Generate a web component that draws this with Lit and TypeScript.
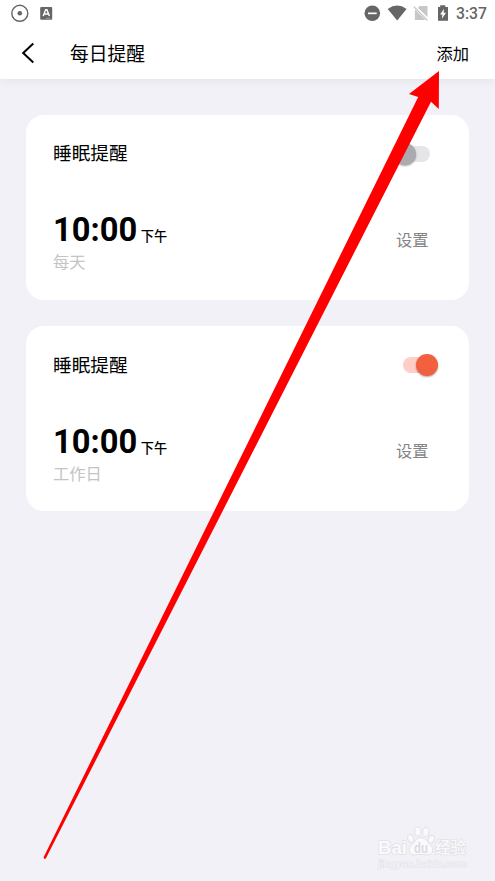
import { LitElement, html, css, svg } from "lit";
import { customElement, property } from "lit/decorators.js";

@customElement("status-bar")
class StatusBar extends LitElement {
  static styles = css`
    :host { display: flex; align-items: center; height: 27px; }
    svg { display: block; flex: 1; height: 27px; }
    .clock { font: 500 15.8px/27px Roboto, sans-serif; color: #666; width: 39px; letter-spacing: -0.05px; }
  `;
  render() {
    return html`
      <svg viewBox="0 0 456 27" width="456" fill="#666">
        <circle cx="19.8" cy="13.3" r="8" fill="none" stroke="#666" stroke-width="1.4" />
        <circle cx="19.8" cy="13.3" r="2.3" />
        <rect x="40.2" y="7" width="12" height="12.7" rx="1" />
        <path d="M43.2 16 45.7 9.8H46.9L49.4 16M44.3 14H48.2" fill="none" stroke="#fff" stroke-width="1.5" />
        <path d="M46 18.3H50.5" stroke="#aaa" stroke-width=".8" />
        <circle cx="372.3" cy="13.3" r="7.8" />
        <rect x="368" y="12.5" width="8.7" height="1.7" fill="#fff" />
        <path d="M387.7 9Q397.2 2.2 406.6 9L397.2 20.6Z" />
        <path d="M419.8 6H427.5V17.2L417.8 7.9ZM414.9 9.3 425.6 20.1H414.9Z" fill="#c7c7c7" />
        <path d="M414.6 5.8 428.3 19.6" stroke="#fff" stroke-width="1.6" />
        <path d="M413.8 6.6 427.5 20.4" stroke="#c0c0c0" stroke-width="1.2" />
        <path d="M440.2 5.3H445.3V7H448V20.8H438V7H440.2Z" />
        <path d="M444 8.8 440.1 14.6H442.4L441.8 18.7 446 12.7H443.6Z" fill="#fff" />
      </svg>
      <span class="clock">3:37</span>
    `;
  }
}

@customElement("toggle-switch")
class ToggleSwitch extends LitElement {
  @property({ type: Boolean, reflect: true }) on = false;
  static styles = css`
    :host { display: flex; align-items: center; width: 27.5px; height: 22px; }
    .track { display: flex; align-items: center; width: 27.5px; height: 15.5px; border-radius: 8px; background: #e5e5e8; }
    .thumb { flex: none; width: 22px; height: 22px; border-radius: 50%; margin-left: -8.5px; background: #aaaaaf; box-shadow: 0 1px 2px #0005; }
    :host([on]) .track { background: #ffcec6; }
    :host([on]) .thumb { background: #f26040; margin-left: 13.5px; }
  `;
  render() {
    return html`<div class="track"><div class="thumb"></div></div>`;
  }
}

@customElement("reminder-card")
class ReminderCard extends LitElement {
  @property() repeat = "";
  @property({ type: Boolean }) active = false;
  static styles = css`
    :host { display: flex; flex-direction: column; box-sizing: border-box; height: 185px; padding: 26px 39px 0 27px; background: #fff; border-radius: 18px; font-family: Roboto, "Noto Sans CJK SC", sans-serif; }
    .row { display: flex; justify-content: space-between; align-items: center; height: 26.5px; }
    .name { font-size: 18.7px; line-height: 27px; color: #000; padding-top: 2px; }
    .details { height: 65px; margin-top: 43.2px; }
    .time { display: flex; align-items: baseline; height: 40px; line-height: 40px; color: #000; }
    .hour { font-size: 32.7px; font-weight: 700; }
    .half { font-size: 13.2px; font-weight: 500; margin-left: 3.5px; }
    .repeat { font-size: 16.3px; line-height: 25px; color: #c4c4c4; }
    .settings { font-size: 16.3px; line-height: 24px; color: #858585; margin: 0 1.5px 3.4px 0; }
  `;
  render() {
    return html`
      <div class="row"><span class="name">睡眠提醒</span><toggle-switch ?on=${this.active}></toggle-switch></div>
      <div class="row details">
        <div>
          <div class="time"><span class="hour">10:00</span><span class="half">下午</span></div>
          <div class="repeat">${this.repeat}</div>
        </div>
        <span class="settings">设置</span>
      </div>
    `;
  }
}

@customElement("site-watermark")
class SiteWatermark extends LitElement {
  static styles = css`
    svg { display: block; }
    text { font-family: "Liberation Sans", "Noto Sans CJK SC", sans-serif; paint-order: stroke; }
  `;
  render() {
    const paw = svg`
      <ellipse cx="45.8" cy="23.5" rx="3" ry="4.1" transform="rotate(-18 45.8 23.5)" />
      <ellipse cx="52.8" cy="16.5" rx="3.1" ry="4.5" />
      <ellipse cx="60.8" cy="17" rx="3.1" ry="4.5" transform="rotate(8 60.8 17)" />
      <ellipse cx="66.3" cy="24.3" rx="3" ry="4.1" transform="rotate(20 66.3 24.3)" />
      <path d="M56 22.5C61 22.5 62 27 66 30.5 70 35 67 40.5 62 40 58 39.2 54 39.2 50 40 45 40.5 42 35 46 30.5 50 27 51 22.5 56 22.5Z" />`;
    return html`
      <svg width="115" height="62" viewBox="0 0 115 62" fill="#fafafc" stroke="#e1e1e6" stroke-width="1" stroke-linejoin="round">
        ${paw}
        <text x="13" y="39.3" font-size="19" font-weight="700" textLength="29" lengthAdjust="spacingAndGlyphs" stroke-width="1.6">Bai</text>
        <text x="49" y="37.8" font-size="14" font-weight="700" textLength="14" lengthAdjust="spacingAndGlyphs" fill="#dcdce1" stroke="none">du</text>
        <text x="70" y="37.8" font-size="15.5" font-weight="500" textLength="31" stroke-width="1.6">经验</text>
        <text x="13.5" y="52" font-size="9" textLength="88" lengthAdjust="spacingAndGlyphs" fill="#f8f8fb" stroke-width="1.2">jingyan.baidu.com</text>
      </svg>
    `;
  }
}

@customElement("app-root")
class AppRoot extends LitElement {
  static styles = css`
    :host { display: block; position: relative; width: 495px; height: 881px; overflow: hidden; background: #f2f1f7; font-family: Roboto, "Noto Sans CJK SC", sans-serif; }
    .top { background: #fff; height: 79px; box-shadow: 0 2px 9px #0000000f; }
    .bar { display: flex; align-items: center; height: 52px; padding: 0 26px 0 20px; color: #000; }
    .back { display: block; width: 50px; height: 26px; }
    .title { flex: 1; font-size: 18.8px; line-height: 28px; padding-top: 3px; }
    .add { font-size: 16.3px; line-height: 24px; padding-top: 3px; }
    .list { display: flex; flex-direction: column; gap: 26.4px; padding: 35.6px 26px 0; }
    .mark { position: absolute; left: 365px; top: 815px; }
    .arrow { position: absolute; left: 0; top: 0; pointer-events: none; }
  `;
  render() {
    return html`
      <header class="top">
        <status-bar></status-bar>
        <nav class="bar">
          <svg class="back" viewBox="0 0 50 26" fill="none" stroke="#000" stroke-width="2"><path d="M13.3 3.5 3.2 13 13.3 22.5" /></svg>
          <span class="title">每日提醒</span>
          <span class="add">添加</span>
        </nav>
      </header>
      <main class="list">
        <reminder-card repeat="每天"></reminder-card>
        <reminder-card repeat="工作日" active></reminder-card>
      </main>
      <site-watermark class="mark"></site-watermark>
      <svg class="arrow" width="495" height="881" viewBox="0 0 495 881">
        <path d="M439 71 438.8 109 431 101.7 45.8 858.5Q44.5 859.8 43.5 857.5L418.2 97 409 94Z" fill="#f00" />
      </svg>
    `;
  }
}
